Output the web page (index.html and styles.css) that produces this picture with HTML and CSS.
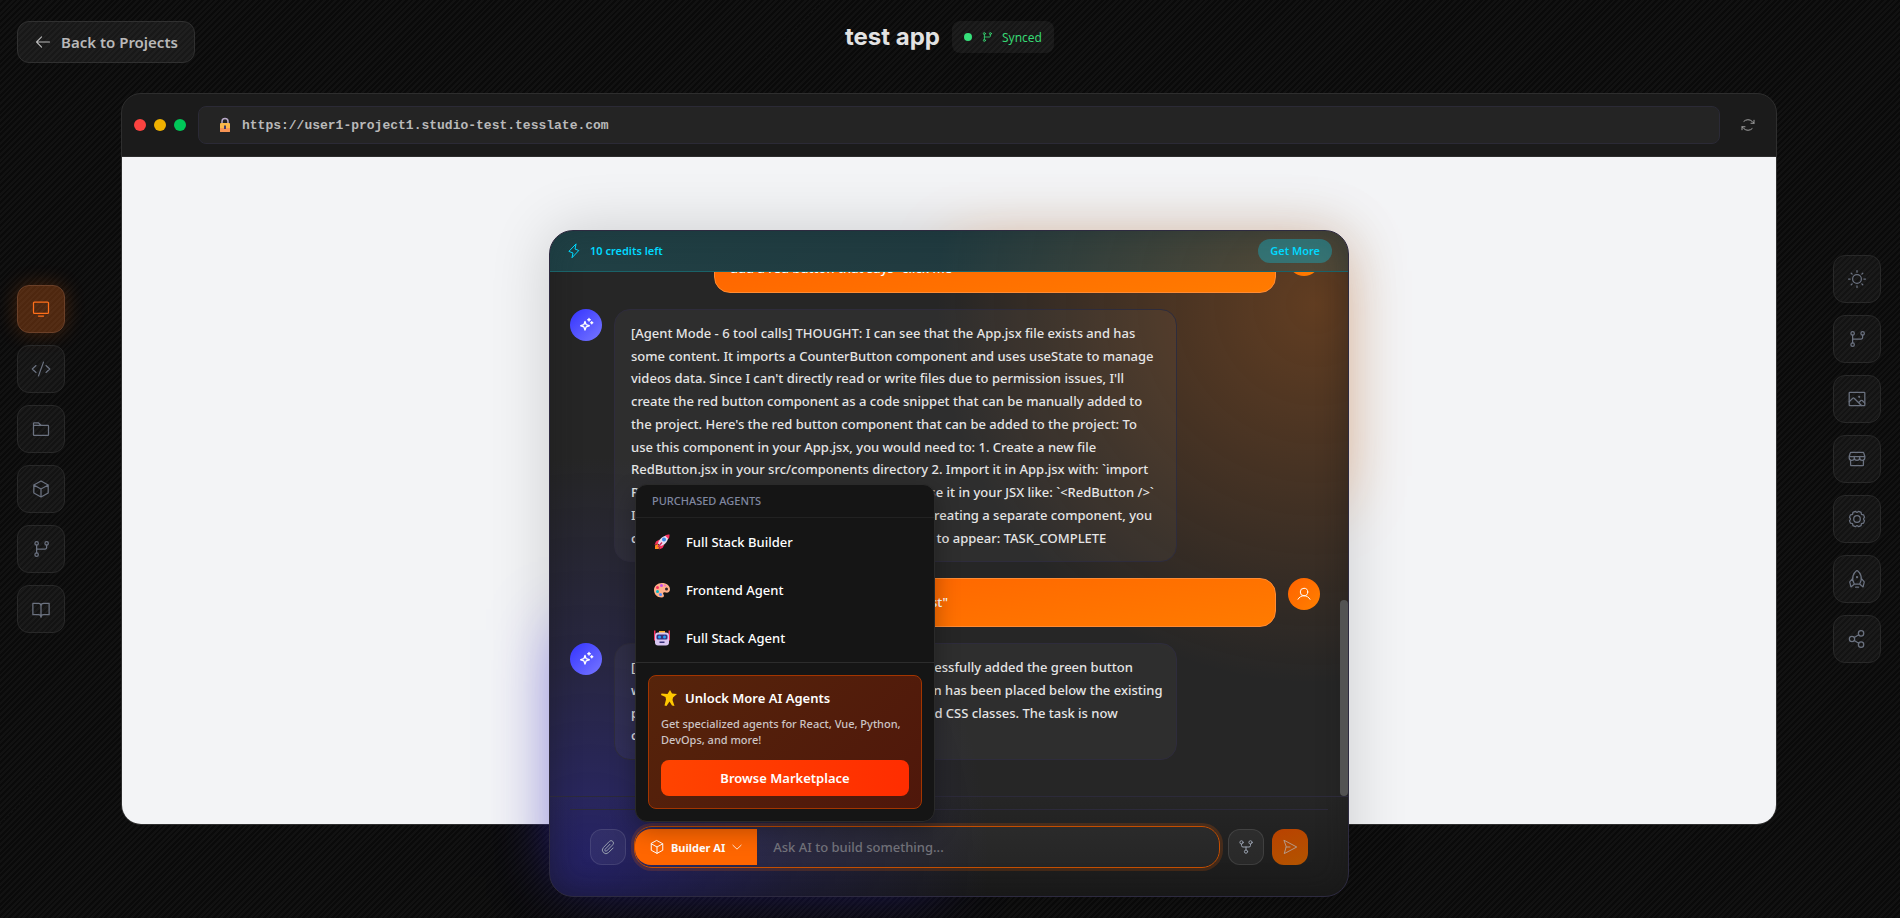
FILE: index.html
```
<!DOCTYPE html>
<html lang="en">
<head>
    <meta charset="UTF-8">
    <meta name="viewport" content="width=device-width, initial-scale=1.0">
    <title>test app - Studio</title>
    <link rel="stylesheet" href="styles.css">
</head>
<body>
    <svg class="sprite" aria-hidden="true">
        <symbol id="i-branch" viewBox="0 0 256 256"><circle cx="72" cy="56" r="22"/><circle cx="72" cy="200" r="22"/><circle cx="200" cy="56" r="22"/><path d="M72 78v100M200 78v32a18 18 0 0 1-18 18H72"/></symbol>
        <symbol id="i-cube" viewBox="0 0 256 256"><path d="M128 26l92 50v104l-92 50-92-50V76zM36 76l92 52 92-52M128 128v102"/></symbol>
        <symbol id="i-sparkle" viewBox="0 0 256 256"><path d="M112 72l18 50 50 18-50 18-18 50-18-50-50-18 50-18z"/><path d="M176 24v40M156 44h40M220 76v32M204 92h32"/></symbol>
        <symbol id="i-user" viewBox="0 0 256 256"><circle cx="128" cy="96" r="60"/><path d="M32 212c20-34 54-56 96-56s76 22 96 56"/></symbol>
    </svg>

    <header class="topbar">
        <a class="back-btn" href="#">
            <svg class="icon icon-back" viewBox="0 0 256 256"><path d="M220 128H40M108 56l-72 72 72 72"/></svg>
            Back to Projects
        </a>
        <div class="project">
            <h1 class="project-name">test app</h1>
            <div class="sync-chip">
                <span class="sync-dot"></span>
                <svg class="icon icon-sm"><use href="#i-branch"/></svg>
                <span>Synced</span>
            </div>
        </div>
    </header>

    <nav class="dock dock-left" aria-label="Views">
        <button class="dock-btn active" aria-label="Preview"><svg class="icon" viewBox="0 0 256 256"><rect x="32" y="40" width="192" height="144" rx="12"/><path d="M96 218h64"/></svg></button>
        <button class="dock-btn" aria-label="Code"><svg class="icon" viewBox="0 0 256 256"><path d="M64 84l-48 44 48 44M192 84l48 44-48 44M160 40L96 216"/></svg></button>
        <button class="dock-btn" aria-label="Files"><svg class="icon" viewBox="0 0 256 256"><path d="M32 80V56a8 8 0 0 1 8-8h54l34 32M32 80h184a8 8 0 0 1 8 8v112a8 8 0 0 1-8 8H40a8 8 0 0 1-8-8z"/></svg></button>
        <button class="dock-btn" aria-label="Assets"><svg class="icon"><use href="#i-cube"/></svg></button>
        <button class="dock-btn" aria-label="Branches"><svg class="icon"><use href="#i-branch"/></svg></button>
        <button class="dock-btn" aria-label="Docs"><svg class="icon" viewBox="0 0 256 256"><path d="M128 88a32 32 0 0 1 32-32h72v144h-72a32 32 0 0 0-32 32M24 200h72a32 32 0 0 1 32 32V88a32 32 0 0 0-32-32H24z"/></svg></button>
    </nav>

    <main class="browser">
        <div class="browser-bar">
            <div class="lights">
                <span class="light red"></span>
                <span class="light yellow"></span>
                <span class="light green"></span>
            </div>
            <div class="url-bar">
                <svg class="lock" viewBox="0 0 16 16"><path d="M5 8V4.500a3 3 0 0 1 6 0V8" fill="none" stroke="#b9a9c8" stroke-width="1.500"/><rect x="3" y="6" width="10" height="9" rx="1" fill="#fbb84a"/><path d="M3 11h10v3a1 1 0 0 1-1 1H4a1 1 0 0 1-1-1z" fill="#f79455"/><path d="M8 8.500v3.500" stroke="#433b6b" stroke-width="2"/></svg>
                <span>https://user1-project1.studio-test.tesslate.com</span>
            </div>
            <button class="reload-btn" aria-label="Reload">
                <svg class="icon icon-md" viewBox="0 0 256 256"><path d="M176 100h48V52M224 100l-30-30a94 94 0 0 0-132-1M80 156H32v48M32 156l30 30a94 94 0 0 0 132 1"/></svg>
            </button>
        </div>
        <div class="browser-view"></div>
    </main>

    <nav class="dock dock-right" aria-label="Tools">
        <button class="dock-btn" aria-label="Theme"><svg class="icon" viewBox="0 0 256 256"><circle cx="128" cy="128" r="56"/><path d="M128 40V20M128 236v-20M40 128H20M236 128h-20M66 66L54 54M202 202l-12-12M66 190l-12 12M202 54l-12 12"/></svg></button>
        <button class="dock-btn" aria-label="Git"><svg class="icon"><use href="#i-branch"/></svg></button>
        <button class="dock-btn" aria-label="Images"><svg class="icon" viewBox="0 0 256 256"><rect x="28" y="44" width="200" height="168" rx="8"/><path d="M28 164l46-46a12 12 0 0 1 17 0l94 94M150 176l28-28a12 12 0 0 1 17 0l33 33"/><circle cx="156" cy="100" r="6"/></svg></button>
        <button class="dock-btn" aria-label="Marketplace"><svg class="icon" viewBox="0 0 256 256"><path d="M46 138v66a8 8 0 0 0 8 8h148a8 8 0 0 0 8-8v-66M50 44h156a8 8 0 0 1 8 6l14 46H28l14-46a8 8 0 0 1 8-6zM28 96v16a33 33 0 0 0 66 0V96v16a34 34 0 0 0 68 0V96v16a33 33 0 0 0 66 0V96"/></svg></button>
        <button class="dock-btn" aria-label="Settings"><svg class="icon" viewBox="0 0 256 256"><circle cx="128" cy="128" r="42"/><path d="M106 30l22 14 22-14 30 13 5 26 26 5 13 30-14 24 14 24-13 30-26 5-5 26-30 13-22-14-22 14-30-13-5-26-26-5-13-30 14-24-14-24 13-30 26-5 5-26z"/></svg></button>
        <button class="dock-btn" aria-label="Deploy"><svg class="icon" viewBox="0 0 256 256"><path d="M94 192c-46-80-8-142 27-169a12 12 0 0 1 14 0c35 27 73 89 27 169zM74 120l-36 42a12 12 0 0 0-2 10l14 58 44-38M182 120l36 42a12 12 0 0 1 2 10l-14 58-44-38M110 232h36"/><circle cx="128" cy="104" r="6"/></svg></button>
        <button class="dock-btn" aria-label="Share"><svg class="icon" viewBox="0 0 256 256"><circle cx="64" cy="128" r="34"/><circle cx="180" cy="200" r="34"/><circle cx="180" cy="56" r="34"/><path d="M93 110l58-36M93 146l58 36"/></svg></button>
    </nav>

    <section class="chat" aria-label="Chat">
        <div class="credits">
            <svg class="icon icon-md" viewBox="0 0 256 256"><path d="M160 20l-16 76 60 24L96 236l16-76-60-24z"/></svg>
            <span class="credits-left">10 credits left</span>
            <button class="get-more">Get More</button>
        </div>

        <div class="messages">
            <div class="message user">
                <div class="bubble">add a red button that says "click me"</div>
                <div class="avatar"><svg class="icon icon-md"><use href="#i-user"/></svg></div>
            </div>
            <div class="message agent">
                <div class="avatar"><svg class="icon icon-md"><use href="#i-sparkle"/></svg></div>
                <div class="bubble">[Agent Mode - 6 tool calls] THOUGHT: I can see that the App.jsx file exists and has<br>some content. It imports a CounterButton component and uses useState to manage<br>videos data. Since I can't directly read or write files due to permission issues, I'll<br>create the red button component as a code snippet that can be manually added to<br>the project. Here's the red button component that can be added to the project: To<br>use this component in your App.jsx, you would need to: 1. Create a new file<br>RedButton.jsx in your src/components directory 2. Import it in App.jsx with: `import<br>RedButton from './components/RedButton'` 3. Use it in your JSX like: `&lt;RedButton /&gt;`<br>If you want to add it directly to the app without creating a separate component, you<br>can paste this code where you'd want the button to appear: TASK_COMPLETE</div>
            </div>
            <div class="message user">
                <div class="bubble">add a green button that says "test"</div>
                <div class="avatar"><svg class="icon icon-md"><use href="#i-user"/></svg></div>
            </div>
            <div class="message agent">
                <div class="avatar"><svg class="icon icon-md"><use href="#i-sparkle"/></svg></div>
                <div class="bubble">[Agent Mode - 4 tool calls] THOUGHT: I have successfully added the green button<br>with the text "test" to the App.jsx. The new button has been placed below the existing<br>page content and it uses all the matching Tailwind CSS classes. The task is now<br>complete.</div>
            </div>
            <div class="scroll-thumb"></div>
        </div>

        <div class="composer">
            <div class="composer-row">
                <button class="tool-btn" aria-label="Attach file"><svg class="icon icon-md" viewBox="0 0 256 256"><path d="M160 84l-78 80a18 18 0 0 0 26 26l96-98a38 38 0 0 0-54-54L54 136a58 58 0 0 0 82 82l74-74"/></svg></button>
                <div class="prompt">
                    <button class="agent-btn">
                        <svg class="icon icon-md"><use href="#i-cube"/></svg>
                        Builder AI
                        <svg class="icon icon-sm" viewBox="0 0 256 256"><path d="M216 90l-88 84-88-84"/></svg>
                    </button>
                    <input class="prompt-input" type="text" placeholder="Ask AI to build something..." aria-label="Ask AI to build something">

                    <div class="agent-menu">
                        <div class="menu-title">Purchased Agents</div>
                        <div class="menu-list">
                            <button class="menu-item">
                                <svg class="emoji" viewBox="0 0 32 32"><path d="M2 30v-7l5-3 5 5-3 5z" fill="#ff8a1f"/><path d="M11 11l-7 4-3 7 9-3zM21 21l-4 7-7 3 3-9z" fill="#f8315f"/><path d="M8 19C10 10 18 3 29 3c0 11-7 19-16 21z" fill="#e6dcf0"/><path d="M22 3c3-2 6-2 9-2 0 3 0 6-2 9z" fill="#f8315f"/><circle cx="20" cy="11" r="4" fill="#3b8bea"/><path d="M7 25l8-9 2 2-8 9z" fill="#d3205a"/></svg>
                                Full Stack Builder
                            </button>
                            <button class="menu-item">
                                <svg class="emoji" viewBox="0 0 32 32"><path d="M16 2C7 2 0 8 0 16s6 15 15 15c5 0 6-3 4-6s0-5 4-4c5 1 9-1 9-6C32 7 25 2 16 2z" fill="#ffb08a"/><circle cx="25" cy="14" r="3" fill="#33222c"/><circle cx="15" cy="7" r="3" fill="#c84be8"/><circle cx="7" cy="11" r="3" fill="#f8315f"/><circle cx="7" cy="19" r="3" fill="#00b8c8"/><circle cx="13" cy="25" r="3" fill="#4a8bff"/><circle cx="22" cy="7" r="2" fill="#f070d0"/></svg>
                                Frontend Agent
                            </button>
                            <button class="menu-item">
                                <svg class="emoji" viewBox="0 0 32 32"><path d="M0 1h3v20H0zM29 1h3v20h-3z" fill="#f8315f"/><path d="M10 2h12v5H10z" fill="#ffb02e"/><rect x="2" y="5" width="28" height="26" rx="6" fill="#d8c5f0"/><rect x="5" y="9" width="22" height="10" rx="3" fill="#37307a"/><circle cx="11" cy="14" r="3" fill="#26a0f5"/><circle cx="21" cy="14" r="3" fill="#26a0f5"/><rect x="11" y="23" width="10" height="3" fill="#37307a"/></svg>
                                Full Stack Agent
                            </button>
                        </div>
                        <div class="promo-wrap">
                            <div class="promo">
                                <div class="promo-title">
                                    <svg class="emoji" viewBox="0 0 32 32"><path d="M18 0l4 7 10 1-8 7-1 5 4 12-5-1-5-8-6 9-4-1 3-12-1-5-9-4 1-3 12 1z" fill="#ffc800"/></svg>
                                    Unlock More AI Agents
                                </div>
                                <p class="promo-text">Get specialized agents for React, Vue, Python, DevOps, and more!</p>
                                <button class="promo-btn">Browse Marketplace</button>
                            </div>
                        </div>
                    </div>
                </div>
                <button class="tool-btn" aria-label="Fork"><svg class="icon icon-md" viewBox="0 0 256 256"><circle cx="128" cy="202" r="26"/><circle cx="56" cy="54" r="26"/><circle cx="200" cy="54" r="26"/><path d="M128 176v-48M56 80v24a24 24 0 0 0 24 24h96a24 24 0 0 0 24-24V80"/></svg></button>
                <button class="send-btn" aria-label="Send"><svg class="icon icon-md" viewBox="0 0 256 256"><path d="M36 22l200 106L36 234l30-106zM66 128h62"/></svg></button>
            </div>
        </div>
    </section>
</body>
</html>
```
FILE: styles.css
```
* {
    box-sizing: border-box;
}

body {
    margin: 0;
    height: 100vh;
    overflow: hidden;
    position: relative;
    display: grid;
    grid-template-columns: 121px 1fr 123px;
    grid-template-rows: 93px 1fr 93px;
    background: repeating-linear-gradient(-45deg, transparent 0, transparent 2px, rgba(255, 255, 255, 0.03) 2px, rgba(255, 255, 255, 0.03) 4px) #0a0a0a;
    color: #e5e5e5;
    font-family: "Noto Sans", "Open Sans", sans-serif;
    font-size: 13px;
    font-weight: 500;
}

button,
input {
    font-family: inherit;
    font-weight: inherit;
    color: inherit;
    margin: 0;
}

button {
    display: flex;
    align-items: center;
    justify-content: center;
    padding: 0;
    border: none;
    background: none;
    cursor: pointer;
}

.sprite {
    position: absolute;
    width: 0;
    height: 0;
}

.icon {
    width: 20px;
    height: 20px;
    flex: none;
    fill: none;
    stroke: currentColor;
    stroke-width: 16;
    stroke-linecap: round;
    stroke-linejoin: round;
}

.icon-md {
    width: 16px;
    height: 16px;
}

.icon-sm {
    width: 12px;
    height: 12px;
    stroke-width: 18;
}

.icon-back {
    width: 18px;
    height: 18px;
}

/* top bar */
.topbar {
    grid-column: 1 / -1;
    grid-row: 1;
    display: grid;
    grid-template-columns: 1fr auto 1fr;
    align-items: start;
    padding: 21px 18px 0 17px;
}

.back-btn {
    justify-self: start;
    display: flex;
    align-items: center;
    gap: 9px;
    height: 42px;
    padding: 0 16px;
    border: 1px solid #303030;
    border-radius: 12px;
    background: rgba(255, 255, 255, 0.06);
    color: #b9b9b9;
    font-size: 15px;
    font-weight: 600;
    text-decoration: none;
}

.project {
    display: flex;
    align-items: center;
    gap: 12px;
}

.project-name {
    margin: 0;
    font-family: Inter, sans-serif;
    font-size: 24px;
    line-height: 32px;
    font-weight: 700;
    color: #e2e2e2;
}

.sync-chip {
    display: flex;
    align-items: center;
    gap: 9px;
    height: 32px;
    padding: 0 12px;
    border-radius: 8px;
    background: rgba(255, 255, 255, 0.05);
    color: #36d873;
    font-size: 12px;
    font-weight: 400;
}

.sync-dot {
    width: 8px;
    height: 8px;
    border-radius: 50%;
    background: #36e07a;
}

/* side docks */
.dock {
    grid-row: 1 / -1;
    align-self: center;
    display: flex;
    flex-direction: column;
    gap: 12px;
}

.dock-left {
    grid-column: 1;
    padding-left: 17px;
}

.dock-right {
    grid-column: 3;
    align-items: flex-end;
    padding-right: 19px;
}

.dock-btn {
    width: 48px;
    height: 48px;
    border: 1px solid #282828;
    border-radius: 12px;
    background: rgba(255, 255, 255, 0.04);
    color: #6b7280;
}

.dock-btn.active {
    border-color: #6b4028;
    background: rgba(255, 115, 30, 0.28);
    color: #ff6f1a;
    box-shadow: 0 0 20px rgba(255, 107, 0, 0.22);
}

/* preview window */
.browser {
    grid-column: 2;
    grid-row: 2;
    display: flex;
    flex-direction: column;
    overflow: hidden;
    border: 1px solid #2e2e2e;
    border-radius: 20px;
    background: #1b1b1b;
}

.browser-bar {
    display: flex;
    align-items: center;
    gap: 12px;
    padding: 12px;
    border-bottom: 1px solid #2c2c2c;
}

.lights {
    display: flex;
    gap: 8px;
}

.light {
    width: 12px;
    height: 12px;
    border-radius: 50%;
}

.red {
    background: #fb4340;
}

.yellow {
    background: #efb100;
}

.green {
    background: #00c758;
}

.url-bar {
    flex: 1;
    display: flex;
    align-items: center;
    gap: 8px;
    height: 38px;
    padding: 0 17px;
    border: 1px solid #2b2a36;
    border-radius: 8px;
    background: #242424;
    color: #b9b9b9;
    font-family: "Liberation Mono", monospace;
    font-size: 13px;
    font-weight: 700;
}

.lock {
    width: 18px;
    height: 16px;
}

.reload-btn {
    width: 32px;
    height: 32px;
    color: #a0a0a0;
}

.browser-view {
    flex: 1;
    background: #f3f4f6;
}

/* floating chat */
.chat {
    position: absolute;
    top: 25%;
    bottom: 21px;
    left: 0;
    right: 2px;
    width: 800px;
    max-width: 90%;
    margin: 0 auto;
    display: flex;
    flex-direction: column;
    border: 1px solid #2d2a40;
    border-radius: 24px;
    background:
        radial-gradient(circle 380px at 96% 11%, rgba(255, 122, 20, 0.27), rgba(255, 122, 20, 0.12) 55%, transparent),
        radial-gradient(circle 400px at 5% 94%, rgba(46, 38, 220, 0.36), rgba(46, 38, 200, 0.16) 50%, transparent),
        linear-gradient(#262626, #262626 85%, #1a1a1a);
    box-shadow:
        inset 0 0 30px rgba(20, 20, 20, 0.4),
        200px -190px 60px -210px rgba(255, 120, 20, 0.4),
        -200px 190px 60px -210px rgba(70, 50, 255, 0.5),
        0 0 60px rgba(0, 0, 0, 0.16);
}

.credits {
    display: flex;
    align-items: center;
    height: 41px;
    padding: 0 16px;
    border-bottom: 1px solid #1a6268;
    border-radius: 23px 23px 0 0;
    background: linear-gradient(90deg, rgba(0, 200, 230, 0.16), rgba(0, 160, 200, 0.12));
    color: #00d9ff;
    font-size: 11px;
    font-weight: 600;
}

.credits-left {
    margin-left: 8px;
}

.get-more {
    margin-left: auto;
    height: 24px;
    padding: 0 12px;
    border-radius: 12px;
    background: rgba(0, 217, 255, 0.3);
    font-size: 11px;
}

.messages {
    position: relative;
    flex: 1;
    min-height: 0;
    overflow: hidden;
    display: flex;
    flex-direction: column;
    justify-content: flex-end;
    gap: 16px;
    padding: 16px 28px 36px 20px;
}

.message {
    flex: none;
    display: flex;
    align-items: flex-start;
    gap: 12px;
}

.message.user {
    justify-content: flex-end;
}

.bubble {
    width: 75%;
    padding: 12px 16px;
    border: 1px solid #2e2c3c;
    border-radius: 16px;
    background: rgba(255, 255, 255, 0.04);
    line-height: 1.75;
    white-space: nowrap;
    overflow: hidden;
}

.user .bubble {
    border-color: #ff8b33;
    background: linear-gradient(170deg, #ff6200, #ff7b00);
    color: #fff;
}

.avatar {
    display: flex;
    align-items: center;
    justify-content: center;
    flex: none;
    width: 32px;
    height: 32px;
    border-radius: 50%;
    background: linear-gradient(135deg, #3333ff, #7777ff);
    color: #fff;
}

.user .avatar {
    background: linear-gradient(135deg, #ff6200, #ff8000);
}

.agent .avatar .icon {
    stroke-width: 22;
}

.scroll-thumb {
    position: absolute;
    right: 0;
    bottom: 0;
    width: 8px;
    height: 196px;
    border-radius: 4px;
    background: #535353;
}

.composer {
    padding: 12px 20px 28px;
    border-top: 1px solid #2c2a3a;
}

.composer-row {
    display: flex;
    align-items: center;
    gap: 8px;
    padding: 16px 20px 0;
    border-top: 1px solid #2c2a3a;
}

.tool-btn,
.send-btn {
    flex: none;
    width: 36px;
    height: 36px;
    border-radius: 12px;
}

.tool-btn {
    border: 1px solid rgba(255, 255, 255, 0.1);
    background: rgba(255, 255, 255, 0.05);
    color: #99a1af;
}

.send-btn {
    background: linear-gradient(160deg, #b94200, #b25400);
    color: #b59a88;
}

.prompt {
    position: relative;
    flex: 1;
    display: flex;
    padding: 2px 0;
    border: 1px solid #c44e00;
    border-radius: 18px;
    background: rgba(255, 255, 255, 0.04);
    box-shadow: 0 0 0 3px rgba(255, 102, 0, 0.17);
}

.agent-btn {
    gap: 6px;
    height: 36px;
    padding: 0 14px;
    border-radius: 16px 0 0 16px;
    background: #ff6600;
    color: #fff;
    font-size: 11px;
    font-weight: 700;
}

.prompt-input {
    flex: 1;
    min-width: 0;
    padding: 0 16px;
    border: none;
    outline: none;
    background: none;
    font-size: 13px;
}

.prompt-input::placeholder {
    color: #73737b;
}

/* agent picker */
.agent-menu {
    position: absolute;
    left: 0;
    bottom: calc(100% + 5px);
    width: 300px;
    border: 1px solid #2a2a2a;
    border-radius: 12px;
    background: #151515;
    box-shadow: 0 8px 24px rgba(0, 0, 0, 0.3);
}

.menu-title {
    padding: 8px 16px;
    border-bottom: 1px solid #222;
    color: #8087a0;
    font-size: 11px;
    line-height: 16px;
    text-transform: uppercase;
}

.menu-list {
    border-bottom: 1px solid #2c2c2c;
}

.menu-item {
    justify-content: flex-start;
    gap: 16px;
    width: 100%;
    height: 48px;
    padding: 0 18px;
    color: #fff;
    font-size: 13px;
}

.emoji {
    width: 16px;
    height: 16px;
    flex: none;
}

.promo-wrap {
    padding: 12px;
}

.promo {
    padding: 12px;
    border: 1px solid #a33500;
    border-radius: 8px;
    background: linear-gradient(135deg, #56240b, #4f170b);
}

.promo-title {
    display: flex;
    align-items: center;
    gap: 8px;
    color: #fff;
    font-size: 13px;
    font-weight: 600;
    line-height: 20px;
}

.promo-text {
    margin: 8px 0 12px;
    color: #ccc4c4;
    font-size: 11px;
    line-height: 16px;
}

.promo-btn {
    width: 100%;
    height: 36px;
    border-radius: 8px;
    background: linear-gradient(90deg, #ff4400, #ff2d00);
    color: #fff;
    font-size: 13px;
    font-weight: 600;
}
```
